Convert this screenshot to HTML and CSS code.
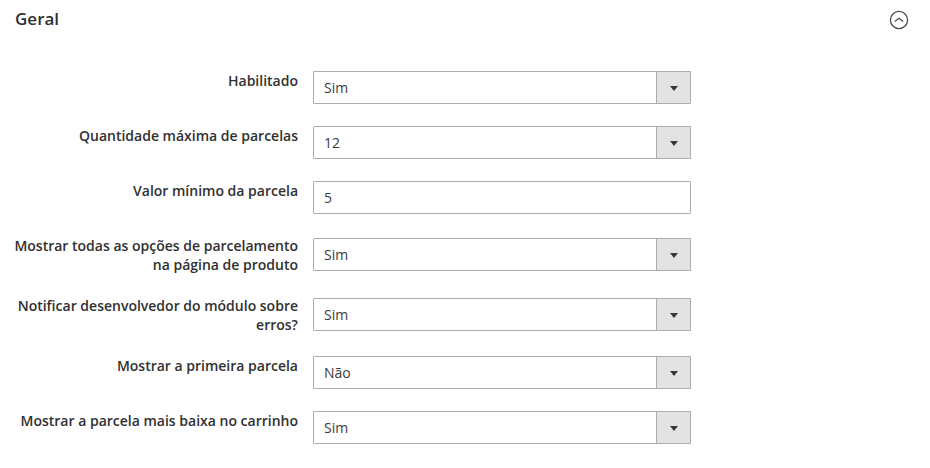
FILE: index.html
```html
<!DOCTYPE html>
<html lang="pt-BR">
<head>
<meta charset="utf-8">
<title>Geral</title>
<link rel="stylesheet" href="styles.css">
</head>
<body>
<section class="section">
  <header class="section-header">
    <h1 class="section-title">Geral</h1>
    <button class="collapse" type="button" aria-label="Geral" aria-expanded="true">
      <svg viewBox="0 0 20 20" width="20" height="20" fill="none" stroke="#514943"><circle cx="10" cy="10" r="8.6" stroke-width="1.3"/><path d="M5.8 11.4 10 8.2l4.2 3.2" stroke-width="1.3"/></svg>
    </button>
  </header>
  <form class="fields">
    <div class="field">
      <label class="label" for="enabled">Habilitado</label>
      <div class="control select"><select id="enabled"><option>Sim</option><option>Não</option></select></div>
    </div>
    <div class="field">
      <label class="label" for="max">Quantidade máxima de parcelas</label>
      <div class="control select"><select id="max"><option>12</option></select></div>
    </div>
    <div class="field">
      <label class="label" for="min">Valor mínimo da parcela</label>
      <div class="control"><input id="min" type="text" value="5"></div>
    </div>
    <div class="field two-line">
      <label class="label" for="all">Mostrar todas as opções de parcelamento na página de produto</label>
      <div class="control select"><select id="all"><option>Sim</option><option>Não</option></select></div>
    </div>
    <div class="field two-line">
      <label class="label" for="notify">Notificar desenvolvedor do módulo sobre erros?</label>
      <div class="control select"><select id="notify"><option>Sim</option><option>Não</option></select></div>
    </div>
    <div class="field">
      <label class="label" for="first">Mostrar a primeira parcela</label>
      <div class="control select"><select id="first"><option>Não</option><option>Sim</option></select></div>
    </div>
    <div class="field">
      <label class="label" for="cart">Mostrar a parcela mais baixa no carrinho</label>
      <div class="control select"><select id="cart"><option>Sim</option><option>Não</option></select></div>
    </div>
  </form>
</section>
</body>
</html>
```
FILE: styles.css
```css
*,
*::before { box-sizing: border-box; }
body {
  margin: 0;
  background: #fff;
  color: #303030;
  font: 14px/19px "Open Sans", sans-serif;
}
.section-header {
  display: flex;
  align-items: center;
  justify-content: space-between;
  padding: 8px 21px 0 15px;
}
.section-title {
  margin: 0;
  font-size: 17px;
  line-height: 22px;
  font-weight: 600;
}
.collapse {
  display: flex;
  padding: 0;
  border: 0;
  background: none;
  margin-top: 2px;
}
.fields {
  display: grid;
  gap: 22px;
  padding-top: 41px;
}
.field {
  display: grid;
  grid-template-columns: 298fr 378fr 224fr;
  column-gap: 15px;
  align-items: start;
}
.label {
  text-align: right;
  font-weight: 600;
}
.control { position: relative; }
.two-line .control { margin-top: 2px; }
.control select,
.control input {
  display: block;
  width: 100%;
  height: 33px;
  padding: 0 10px;
  border: 1px solid #adadad;
  border-radius: 1px;
  background: #fff;
  color: #3c3c3c;
  font: inherit;
  appearance: none;
}
.select::before {
  content: "";
  position: absolute;
  inset: 0 0 0 auto;
  width: 35px;
  border: 1px solid #adadad;
  border-radius: 0 1px 1px 0;
  background: #e3e3e3;
  pointer-events: none;
}
.select::after {
  content: "";
  position: absolute;
  top: 15px;
  right: 13px;
  border: 4px solid transparent;
  border-top: 5px solid #41362f;
  border-bottom: 0;
  pointer-events: none;
}
```
